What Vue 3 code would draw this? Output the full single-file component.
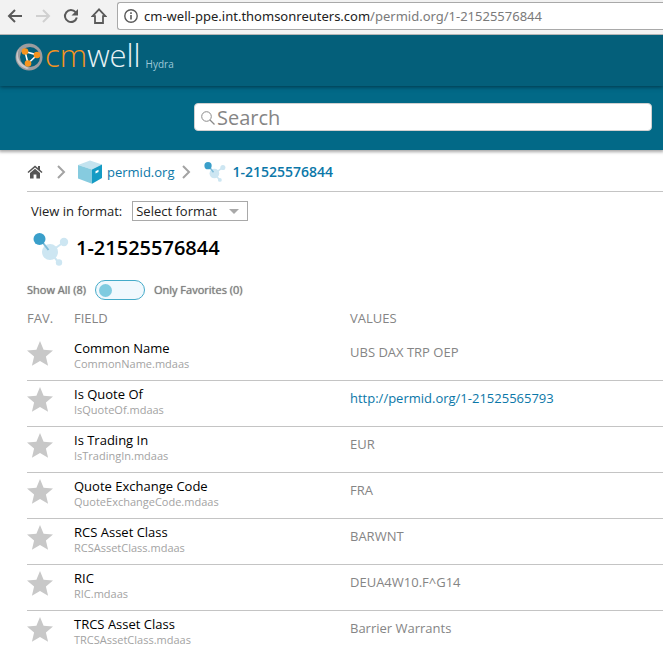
<script setup>
import { ref } from 'vue'

const query = ref('')
const format = ref('')
const onlyFavorites = ref(false)

const fields = [
  { name: 'Common Name', key: 'CommonName.mdaas', value: 'UBS DAX TRP OEP' },
  { name: 'Is Quote Of', key: 'IsQuoteOf.mdaas', value: 'http://permid.org/1-21525565793', link: true },
  { name: 'Is Trading In', key: 'IsTradingIn.mdaas', value: 'EUR' },
  { name: 'Quote Exchange Code', key: 'QuoteExchangeCode.mdaas', value: 'FRA' },
  { name: 'RCS Asset Class', key: 'RCSAssetClass.mdaas', value: 'BARWNT' },
  { name: 'RIC', key: 'RIC.mdaas', value: 'DEUA4W10.F^G14' },
  { name: 'TRCS Asset Class', key: 'TRCSAssetClass.mdaas', value: 'Barrier Warrants' }
]
</script>

<template>
  <div class="page">
    <div class="browser">
      <button class="nav" type="button" aria-label="Back">
        <svg width="16" height="16" viewBox="0 0 16 16"><path d="M15 8H2M8 2L2 8l6 6" fill="none" stroke="#5a5a5a" stroke-width="2" /></svg>
      </button>
      <button class="nav" type="button" aria-label="Forward">
        <svg width="16" height="16" viewBox="0 0 16 16"><path d="M1 8h13M8 2l6 6-6 6" fill="none" stroke="#d0d0d0" stroke-width="2" /></svg>
      </button>
      <button class="nav" type="button" aria-label="Reload">
        <svg width="16" height="16" viewBox="0 0 16 16">
          <path d="M12.6 4.2A6 6 0 1 0 13.8 9.5" fill="none" stroke="#5a5a5a" stroke-width="2" />
          <path d="M15 1v6.5H8.5z" fill="#5a5a5a" />
        </svg>
      </button>
      <button class="nav" type="button" aria-label="Home">
        <svg width="16" height="16" viewBox="0 0 16 16"><path d="M8 1.4L1.6 8.2H4V15h8V8.2h2.4z" fill="none" stroke="#5a5a5a" stroke-width="1.8" /></svg>
      </button>
      <div class="address">
        <svg width="14" height="14" viewBox="0 0 14 14">
          <circle cx="7" cy="7" r="6.2" fill="none" stroke="#5a5a5a" stroke-width="1.4" />
          <path d="M7 6v4.5M7 3.3v1.6" stroke="#5a5a5a" stroke-width="1.6" />
        </svg>
        <span class="url"><span class="host">cm-well-ppe.int.thomsonreuters.com</span>/permid.org/1-21525576844</span>
      </div>
    </div>

    <header class="brand">
      <svg width="28" height="28" viewBox="0 0 28 28">
        <circle cx="14" cy="14" r="13.500" fill="#9c9c9f" />
        <circle cx="15" cy="14" r="10" fill="#045f7a" />
        <path d="M4 6c-3 7 0 15 10 19l-2 1C1 23-1 13 4 6z" fill="#c8c8ca" />
        <path d="M10 8.500l12 3.500-9 8.500z" fill="none" stroke="#fff" stroke-width="1.600" />
        <circle cx="10" cy="8.500" r="3.300" fill="#f7941e" />
        <circle cx="22" cy="12" r="3.300" fill="#f7941e" />
        <circle cx="13" cy="20.500" r="3.300" fill="#f7941e" />
      </svg>
      <span class="logo"><span class="cm">cm</span>well</span>
      <span class="edition">Hydra</span>
    </header>

    <div class="searchbar">
      <label class="search">
        <svg width="14" height="14" viewBox="0 0 14 14">
          <circle cx="5.500" cy="5.500" r="4.800" fill="none" stroke="#8a8a8a" />
          <path d="M9 9l4.500 4.500" stroke="#8a8a8a" stroke-width="1.200" />
        </svg>
        <input v-model="query" type="text" placeholder="Search" aria-label="Search">
      </label>
    </div>

    <main>
      <nav class="crumbs">
        <a class="home" href="#" aria-label="Home">
          <svg width="16" height="14" viewBox="0 0 16 14">
            <path d="M8 0.500L0.500 7l1 1L8 2.500 14.500 8l1-1L13 4.800V1h-2v2.100z" fill="#555" />
            <path d="M8 3.800L3 8v5.500h3.600V9.500h2.800v4H13V8z" fill="#555" />
          </svg>
        </a>
        <svg class="chevron" width="9" height="14" viewBox="0 0 9 14"><path d="M1 1l6 6-6 6" fill="none" stroke="#a3a3a3" stroke-width="2" /></svg>
        <a class="crumb" href="#">
          <svg width="24" height="24" viewBox="0 0 24 24">
            <path d="M0 5L12 0.500l12 4L14 9.500z" fill="#c3e3ef" />
            <path d="M0 5l14 4.500V23.800L0 18.500z" fill="#86cbdf" />
            <path d="M14 9.500l10-5v13.500l-10 5.800z" fill="#149bc4" />
            <path d="M17.500 11.200l3-1.500v2.200l-3 1.500z" fill="#fff" />
          </svg>
          permid.org
        </a>
        <svg class="chevron" width="9" height="14" viewBox="0 0 9 14"><path d="M1 1l6 6-6 6" fill="none" stroke="#a3a3a3" stroke-width="2" /></svg>
        <a class="crumb current" href="#">
          <svg width="24" height="20" viewBox="0 0 36 33">
            <path d="M17 19L31 9M17 19l9 11" stroke="#cde6f2" stroke-width="2.500" />
            <circle cx="17" cy="19" r="8" fill="#cde6f2" />
            <circle cx="31" cy="9" r="4.200" fill="#cde6f2" />
            <circle cx="26" cy="29.500" r="3.200" fill="#cde6f2" />
            <path d="M7 6l8.500 11" stroke="#7fbcd9" stroke-width="2.500" />
            <circle cx="6.500" cy="6" r="6" fill="#3a9fca" />
          </svg>
          1-21525576844
        </a>
      </nav>

      <div class="format">
        <label for="format">View in format:</label>
        <span class="select">
          <select id="format" v-model="format">
            <option value="">Select format</option>
          </select>
          <svg width="10" height="5" viewBox="0 0 10 5"><path d="M0 0h10L5 5z" fill="#a9a9a9" /></svg>
        </span>
      </div>

      <h1>
        <svg width="36" height="33" viewBox="0 0 36 33">
          <path d="M17 19L31 9M17 19l9 11" stroke="#cde6f2" stroke-width="2" />
          <circle cx="17" cy="19" r="8" fill="#cde6f2" />
          <circle cx="31" cy="9" r="4.200" fill="#cde6f2" />
          <circle cx="26" cy="29.500" r="3.200" fill="#cde6f2" />
          <path d="M7 6l8.500 11" stroke="#7fbcd9" stroke-width="2" />
          <circle cx="6.500" cy="6" r="6" fill="#3a9fca" />
        </svg>
        <span>1-21525576844</span>
      </h1>

      <div class="filter">
        <label for="favorites">Show All (8)</label>
        <input id="favorites" v-model="onlyFavorites" type="checkbox">
        <label for="favorites">Only Favorites (0)</label>
      </div>

      <table>
        <thead>
          <tr>
            <th class="fav">FAV.</th>
            <th class="field">FIELD</th>
            <th>VALUES</th>
          </tr>
        </thead>
        <tbody>
          <tr v-for="field in fields" :key="field.key">
            <td>
              <button class="star" type="button" :aria-label="'Favorite ' + field.name">
                <svg width="26" height="25" viewBox="0 0 26 25"><path d="M13 0l3.600 8.700 9.400.8-7.100 6.100 2.200 9.200L13 19.900l-8.100 4.900 2.200-9.200L0 9.500l9.400-.8z" fill="#c8c8c8" /></svg>
              </button>
            </td>
            <td>
              <div class="name">{{ field.name }}</div>
              <div class="key">{{ field.key }}</div>
            </td>
            <td class="value">
              <a v-if="field.link" href="#">{{ field.value }}</a>
              <template v-else>{{ field.value }}</template>
            </td>
          </tr>
        </tbody>
      </table>
    </main>
  </div>
</template>

<style>
body {
  margin: 0;
  background: #fff;
}
</style>

<style scoped>
.page {
  font: 13px/18px "Open Sans", "Noto Sans", sans-serif;
  color: #222;
}
svg {
  display: block;
  flex: none;
}
a {
  color: #0b77a8;
  text-decoration: none;
}
button {
  padding: 0;
  border: 0;
  background: none;
}
.browser {
  display: flex;
  align-items: center;
  gap: 12px;
  height: 35px;
  box-sizing: border-box;
  padding: 0 0 3px 7px;
  background: #f2f2f2;
  border-bottom: 1px solid #b5b5b5;
}
.address {
  flex: 1;
  display: flex;
  align-items: center;
  gap: 6px;
  height: 28px;
  box-sizing: border-box;
  margin-left: -2px;
  padding-left: 6px;
  background: #fff;
  border: 1px solid #a9a9a9;
  border-right: 0;
  border-radius: 3px 0 0 3px;
}
.url {
  font-family: "Noto Sans", sans-serif;
  color: #7a7a7a;
  white-space: nowrap;
}
.host {
  color: #222;
}
.brand {
  position: relative;
  display: flex;
  align-items: center;
  height: 51px;
  box-sizing: border-box;
  padding: 0 15px 8px;
  background: #045f7a;
  box-shadow: 0 1px 4px rgba(0, 40, 55, 0.8);
  clip-path: inset(0 0 -8px 0);
}
.logo {
  margin-left: 2px;
  padding-bottom: 4px;
  font: 300 31px/40px "Open Sans", sans-serif;
  color: #e8f2f5;
}
.cm {
  color: #f7941e;
}
.edition {
  align-self: flex-end;
  margin-left: 5px;
  font-size: 10px;
  line-height: 12px;
  color: #9cc8d8;
  padding-bottom: 8px;
}
.searchbar {
  display: flex;
  height: 64px;
  box-sizing: border-box;
  padding: 17px 11px 0 194px;
  background: #026987;
  box-shadow: 0 1px 3px 1px rgba(0, 0, 0, 0.35);
}
.search {
  flex: 1;
  display: flex;
  align-items: center;
  gap: 2px;
  height: 28px;
  box-sizing: border-box;
  padding: 2px 0 0 6px;
  background: #fff;
  border: 1px solid #d0d0d0;
  border-radius: 4px;
}
.search input {
  flex: 1;
  min-width: 0;
  height: 24px;
  padding: 0;
  border: 0;
  outline: 0;
  background: none;
  font: 20px/24px "Open Sans", "Noto Sans", sans-serif;
}
.search input::placeholder {
  color: #858585;
}
main {
  padding-left: 27px;
}
.crumbs {
  display: flex;
  align-items: center;
  height: 42px;
  box-sizing: border-box;
  padding-top: 2px;
  border-bottom: 1px solid #c4c4c4;
}
.chevron {
  margin: 0 12px 0 8px;
}
.home {
  padding-right: 6px;
}
.crumb {
  display: flex;
  align-items: center;
  gap: 5px;
}
.current {
  font-size: 14px;
  font-weight: 600;
}
.format {
  display: flex;
  align-items: center;
  gap: 10px;
  padding: 9px 0 0 4px;
}
.select {
  display: grid;
  align-items: center;
  width: 116px;
}
.select > * {
  grid-area: 1 / 1;
}
.select svg {
  justify-self: end;
  margin-right: 9px;
  pointer-events: none;
}
select {
  appearance: none;
  width: 100%;
  height: 20px;
  box-sizing: border-box;
  padding: 0 3px;
  border: 1px solid #a9a9a9;
  border-radius: 0;
  background: #fff;
  font: inherit;
  color: #222;
}
h1 {
  display: flex;
  align-items: center;
  gap: 7px;
  margin: 0;
  padding: 12px 0 0 6px;
  font-size: 20px;
  line-height: 28px;
  font-weight: 600;
  color: #000;
}
h1 span {
  padding-bottom: 4px;
}
.filter {
  display: flex;
  align-items: center;
  gap: 9px;
  padding-top: 14px;
  font-size: 11px;
  color: #808080;
  text-shadow: 0 0 1px #808080;
}
.filter input {
  appearance: none;
  display: flex;
  align-items: center;
  width: 50px;
  height: 20px;
  box-sizing: border-box;
  margin: 0;
  padding: 0 3px;
  border: 1px solid #45abc9;
  border-radius: 10px;
  background: #f0f8fd;
}
.filter input::before {
  content: "";
  width: 13px;
  height: 13px;
  border-radius: 50%;
  background: #7fcbe0;
}
.filter input:checked {
  justify-content: flex-end;
}
table {
  width: 100%;
  border-collapse: collapse;
  table-layout: fixed;
}
th {
  height: 35px;
  padding: 0;
  font-weight: 400;
  text-align: left;
  color: #858585;
}
.fav {
  width: 47px;
}
.field {
  width: 276px;
}
td {
  height: 41px;
  padding: 4px 0 0;
  vertical-align: top;
}
tbody tr + tr td {
  border-top: 1px solid #c4c4c4;
}
.star {
  display: block;
  margin-top: 2px;
}
.name {
  color: #000;
}
.key {
  font-size: 11px;
  line-height: 14px;
  color: #a3a3a3;
}
.value {
  padding-top: 8px;
  height: 37px;
  color: #858585;
}
</style>
